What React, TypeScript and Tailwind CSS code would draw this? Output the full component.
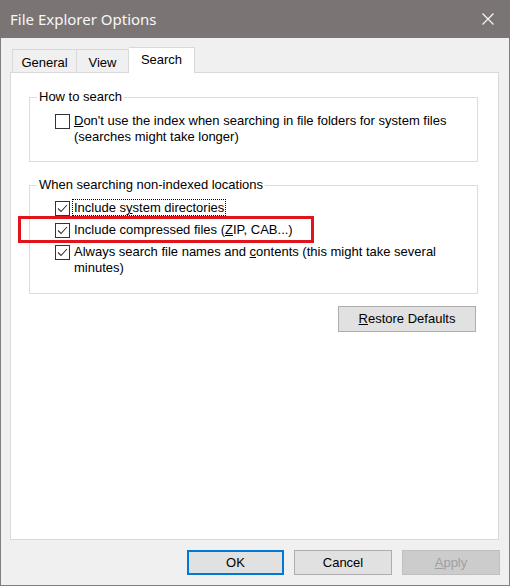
import type { ReactNode } from "react";

const Check = ({ checked }: { checked?: boolean }) => (
  <span className="w-[15px] h-[15px] shrink-0 border border-[#333333] bg-white flex items-center justify-center mt-[1px]">
    {checked && (
      <svg width="13" height="13" viewBox="0 0 13 13">
        <polyline points="2,6.5 5,9.5 11,3" fill="none" stroke="#333333" strokeWidth="1.1" />
      </svg>
    )}
  </span>
);

const Row = ({ checked, children }: { checked?: boolean; children: ReactNode }) => (
  <div className="flex items-start gap-[4px] leading-[16px]">
    <Check checked={checked} />
    <div>{children}</div>
  </div>
);

const App = () => {
  return (
    <div
      className="w-[510px] h-[586px] flex flex-col text-[13px] text-black"
      style={{ fontFamily: '"Liberation Sans", Arial, sans-serif' }}
    >
      {/* title bar */}
      <div className="h-[38px] bg-[#7a7574] flex items-center justify-between pl-[10px] pr-[16px]">
        <span className="text-[15px] text-[#f7f7f7]" style={{ fontFamily: '"Noto Sans", sans-serif' }}>
          File Explorer Options
        </span>
        <svg width="12" height="12" viewBox="0 0 12 12">
          <path d="M0.5 0.5 L11.5 11.5 M11.5 0.5 L0.5 11.5" stroke="#f7f7f7" strokeWidth="1.2" />
        </svg>
      </div>

      <div className="flex-1 bg-[#f0f0f0] border-x border-b border-[#7f7f7f] flex flex-col">
        {/* tabs */}
        <div className="flex items-end h-[25px] mt-[9px] ml-[11px]">
          <div className="w-[65px] h-[23px] border border-b-0 border-[#d9d9d9] bg-[#f0f0f0] flex items-start justify-center pt-[3px]">
            General
          </div>
          <div className="w-[52px] h-[23px] border border-l-0 border-b-0 border-[#d9d9d9] bg-[#f0f0f0] flex items-start justify-center pt-[3px]">
            View
          </div>
          <div className="w-[66px] h-[26px] -mb-[1px] border border-l-0 border-b-0 border-[#d9d9d9] bg-white flex items-start justify-center pt-[2px] relative z-10">
            Search
          </div>
        </div>

        {/* panel */}
        <div className="ml-[9px] w-[489px] h-[468px] bg-white border border-[#d9d9d9] pt-[16px] pl-[18px]">
          <fieldset className="w-[449px] border border-[#dcdcdc] pb-[16px]">
            <legend className="ml-[7px] px-[2px] leading-[16px]">How to search</legend>
            <div className="mt-[8px] pl-[25px]">
              <Row>
                <span>
                  <u>D</u>on't use the index when searching in file folders for system files
                  <br />
                  (searches might take longer)
                </span>
              </Row>
            </div>
          </fieldset>

          <fieldset className="w-[449px] mt-[15px] border border-[#dcdcdc] pb-[17px]">
            <legend className="ml-[7px] px-[2px] leading-[16px]">When searching non-indexed locations</legend>
            <div className="mt-[7px] pl-[25px] flex flex-col gap-[6px]">
              <Row checked>
                <span className="outline outline-1 outline-dotted outline-black -ml-[1px] px-[1px]">
                  Include s<u>y</u>stem directories
                </span>
              </Row>
              <div className="relative">
                <Row checked>
                  <span>
                    Include compressed files (<u>Z</u>IP, CAB...)
                  </span>
                </Row>
                <div className="absolute left-[-37px] top-[-6px] w-[296px] h-[27px] border-[3px] border-[#e2141b]" />
              </div>
              <Row checked>
                <span>
                  Always search file names and <u>c</u>ontents (this might take several
                  <br />
                  minutes)
                </span>
              </Row>
            </div>
          </fieldset>

          <div className="w-[449px] flex justify-end mt-[12px]">
            <button className="w-[138px] h-[26px] bg-[#e1e1e1] border border-[#adadad] mr-[2px]">
              <u>R</u>estore Defaults
            </button>
          </div>
        </div>

        {/* bottom buttons */}
        <div className="flex justify-end gap-[10px] mt-[10px] mr-[9px]">
          <button className="w-[97px] h-[25px] bg-[#e1e1e1] border-2 border-[#0078d7]">OK</button>
          <button className="w-[98px] h-[25px] bg-[#e1e1e1] border border-[#adadad]">Cancel</button>
          <button className="w-[98px] h-[25px] bg-[#cccccc] border border-[#bfbfbf] text-[#a0a0a0]">
            <u>A</u>pply
          </button>
        </div>
      </div>
    </div>
  );
};

export default App;
